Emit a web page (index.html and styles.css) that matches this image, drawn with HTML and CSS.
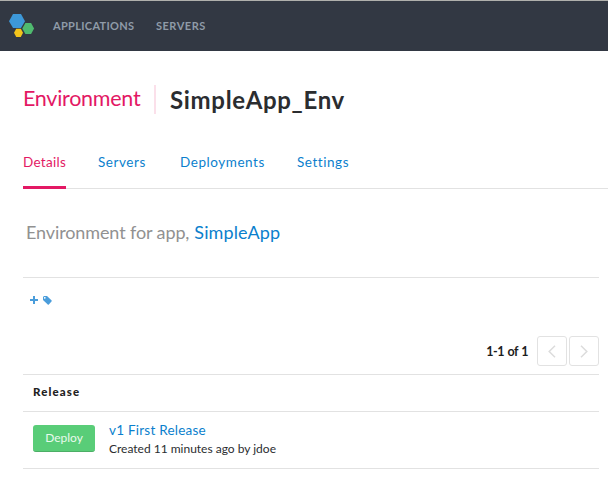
FILE: index.html
```html
<!DOCTYPE html>
<html lang="en">
<head>
<meta charset="utf-8">
<title>SimpleApp_Env</title>
<link rel="stylesheet" href="styles.css">
</head>
<body>
<header class="topbar">
  <svg class="logo" width="28" height="28" viewBox="0 0 28 28" aria-hidden="true">
    <path fill="#3d98d8" d="M1 9.200 5 2h8l4 7.200-4 6.800H5z"/>
    <path fill="#4fba6f" d="M14.300 16.400 17.400 11h5.700l3 5.400-3 5.500h-5.700z"/>
    <path fill="#f3c41b" d="M6 20.800 8.200 16.800h4.600l2.200 4-2.200 4.100H8.200z"/>
  </svg>
  <nav class="mainnav"><a class="apps">APPLICATIONS</a><a class="srv">SERVERS</a></nav>
</header>
<main>
  <div class="title">
    <span class="kind">Environment</span>
    <h1>SimpleApp_Env</h1>
  </div>
  <nav class="tabs">
    <a class="active t1">Details</a><a class="t2">Servers</a><a class="t3">Deployments</a><a class="t4">Settings</a>
  </nav>
  <div class="content">
    <p class="desc"><span class="text">Environment for app,</span><a>SimpleApp</a></p>
    <div class="tags">
      <svg width="8" height="8" viewBox="0 0 8 8"><path fill="#4a9ddb" d="M3 0h2v3h3v2H5v3H3V5H0V3h3z"/></svg>
      <svg width="9" height="9" viewBox="0 0 9 9"><path fill="#4a9ddb" fill-rule="evenodd" d="M1 0H4L8.700 4.500V5.300L5.600 8.700H5L0 4V1zM1.800 1.100a.8.8 0 1 0 .01 0z"/></svg>
    </div>
    <div class="pager">
      <span class="count">1-1 of 1</span>
      <button><svg width="8" height="13" viewBox="0 0 8 13"><path d="M7 .8 1.200 6.500 7 12.200"/></svg></button>
      <button><svg width="8" height="13" viewBox="0 0 8 13"><path d="M1 .8 6.800 6.500 1 12.200"/></svg></button>
    </div>
    <div class="thead"><span>Release</span></div>
    <div class="row">
      <button class="deploy"><span>Deploy</span></button>
      <div class="info"><a>v1 First Release</a><p><span>Created 11 minutes ago by jdoe</span></p></div>
    </div>
  </div>
</main>
</body>
</html>
```
FILE: styles.css
```css
* { box-sizing: border-box; }
body { margin: 0; background: #fff; color: #2b2d30; font-family: Lato, "Liberation Sans", sans-serif; overflow: hidden; }
h1, p { margin: 0; }
button { padding: 0; font: inherit; }
a { color: #0b7fcd; white-space: nowrap; }
span { white-space: nowrap; }
.topbar { display: flex; height: 51px; background: #323843; border-top: 1px solid #b0b0ac; padding: 11px 0 0 8px; }
.logo { flex: none; }
.mainnav { display: flex; gap: 22px; margin-left: 17px; font-size: 11px; font-weight: 700; line-height: 28px; letter-spacing: .32px; }
.mainnav a { color: #8f9ba8; }
.apps { width: 81px; }
.srv { letter-spacing: .5px; }
.title { display: flex; align-items: center; height: 29px; margin: 34px 0 0 23px; }
.kind { width: 133px; height: 29px; border-right: 2px solid #fbe0ea; color: #e31864; font-size: 21.500px; line-height: 27px; letter-spacing: -.27px; }
h1 { margin-left: 14px; font-size: 24px; font-weight: 700; line-height: 30px; letter-spacing: .68px; }
.tabs { display: flex; height: 75px; margin-left: 23px; border-bottom: 1px solid #e2e2e2; padding-top: 36px; font-size: 13.500px; line-height: 25px; letter-spacing: .55px; }
.tabs a { height: 39px; }
.tabs .active { color: #e31864; border-bottom: 3px solid #e31864; letter-spacing: .3px; }
.t1 { width: 43px; margin-right: 32px; }
.t2 { width: 50px; margin-right: 32px; }
.t3 { width: 85px; margin-right: 32px; }
.content { margin: 0 9px 0 23px; }
.desc { display: flex; gap: 5px; height: 89px; padding: 28px 0 0 3px; border-bottom: 1px solid #e2e2e2; font-size: 18px; line-height: 30px; color: #919191; }
.desc .text { letter-spacing: -.11px; }
.desc a { letter-spacing: .12px; }
.tags { display: flex; gap: 5px; height: 58px; padding: 18px 0 0 7px; }
.pager { display: flex; gap: 2px; height: 38px; justify-content: flex-end; }
.count { margin-right: 7px; font-size: 12.500px; font-weight: 700; line-height: 31px; letter-spacing: -.4px; word-spacing: .6px; color: #1c1c1c; }
.pager button { display: grid; place-items: center; width: 30px; height: 30px; background: #fff; border: 1px solid #e2e2e2; border-radius: 3px; }
.pager path { fill: none; stroke: #dcdcdc; stroke-width: 1.500; }
.thead { height: 38px; padding-left: 10px; border-top: 1px solid #e2e2e2; border-bottom: 1px solid #e2e2e2; font-size: 11.500px; font-weight: 900; line-height: 34px; letter-spacing: 1.100px; color: #222; }
.row { display: flex; height: 57px; padding: 13px 0 0 10px; border-bottom: 1px solid #e2e2e2; }
.deploy { width: 62px; height: 27px; background: #59cd78; border: 0; border-bottom: 1px solid #4cae66; border-radius: 3px; color: #e9faed; font-size: 12px; line-height: 26px; }
.info { margin-left: 14px; margin-top: -5px; }
.info a { display: block; font-size: 13.500px; line-height: 20px; letter-spacing: .23px; }
.info p { font-size: 12px; line-height: 17px; }
```
